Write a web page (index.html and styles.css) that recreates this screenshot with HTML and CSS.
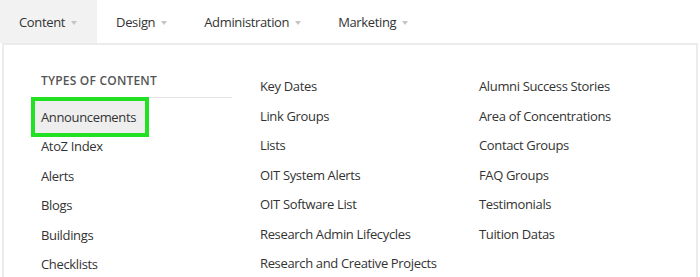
FILE: index.html
```html
<!DOCTYPE html>
<html>
<head>
<meta charset="utf-8">
<link rel="stylesheet" href="styles.css">
</head>
<body>
<nav class="topnav">
  <div class="tab tab-active">Content <span class="caret"></span></div>
  <div class="tab">Design <span class="caret"></span></div>
  <div class="tab">Administration <span class="caret"></span></div>
  <div class="tab">Marketing <span class="caret"></span></div>
</nav>
<div class="panel">
  <div class="columns">
    <div class="col">
      <div class="heading">TYPES OF CONTENT</div>
      <ul class="list">
        <li><span class="item-highlight">Announcements</span></li>
        <li>AtoZ Index</li>
        <li>Alerts</li>
        <li>Blogs</li>
        <li>Buildings</li>
        <li>Checklists</li>
      </ul>
    </div>
    <div class="col">
      <ul class="list">
        <li>Key Dates</li>
        <li>Link Groups</li>
        <li>Lists</li>
        <li>OIT System Alerts</li>
        <li>OIT Software List</li>
        <li>Research Admin Lifecycles</li>
        <li>Research and Creative Projects</li>
      </ul>
    </div>
    <div class="col">
      <ul class="list">
        <li>Alumni Success Stories</li>
        <li>Area of Concentrations</li>
        <li>Contact Groups</li>
        <li>FAQ Groups</li>
        <li>Testimonials</li>
        <li>Tuition Datas</li>
      </ul>
    </div>
  </div>
</div>
</body>
</html>
```
FILE: styles.css
```css
html, body {
  margin: 0;
  padding: 0;
  background: #fff;
  font-family: "Open Sans", "Liberation Sans", sans-serif;
  color: #333;
  overflow: hidden;
}
.topnav {
  display: flex;
  height: 43px;
  align-items: stretch;
}
.tab {
  display: flex;
  align-items: center;
  gap: 6px;
  padding: 0 18px 0 19px;
  font-size: 13px;
  letter-spacing: -0.35px;
  color: #333;
}
.tab-active {
  background: #f2f2f2;
  padding-right: 20px;
}
.caret {
  width: 0;
  height: 0;
  border-left: 3.5px solid transparent;
  border-right: 3.5px solid transparent;
  border-top: 4px solid #c4c4c4;
  margin-top: 2px;
}
.panel {
  margin: 0 2px;
  border: 2px solid #ececec;
  border-bottom: none;
  height: 230px;
  padding: 27px 0 0 37px;
}
.columns {
  display: grid;
  grid-template-columns: 191px 191px 191px;
  column-gap: 28px;
}
.heading {
  font-size: 12px;
  font-weight: 600;
  letter-spacing: 0.2px;
  color: #555;
  line-height: 18px;
  padding-bottom: 7px;
  border-bottom: 1px solid #e2e2e2;
  margin-bottom: 4.5px;
}
.list {
  list-style: none;
  margin: 0;
  padding: 0;
}
.list li {
  font-size: 13px;
  letter-spacing: -0.35px;
  line-height: 29.5px;
  height: 29.5px;
  white-space: nowrap;
}
.item-highlight {
  display: inline-block;
  line-height: 32px;
  height: 32px;
  margin: -1.25px 0 0 -6px;
  padding: 0 9px 0 6px;
  background: #eeeeee;
  outline: 4px solid #22e022;
  vertical-align: top;
}
```
